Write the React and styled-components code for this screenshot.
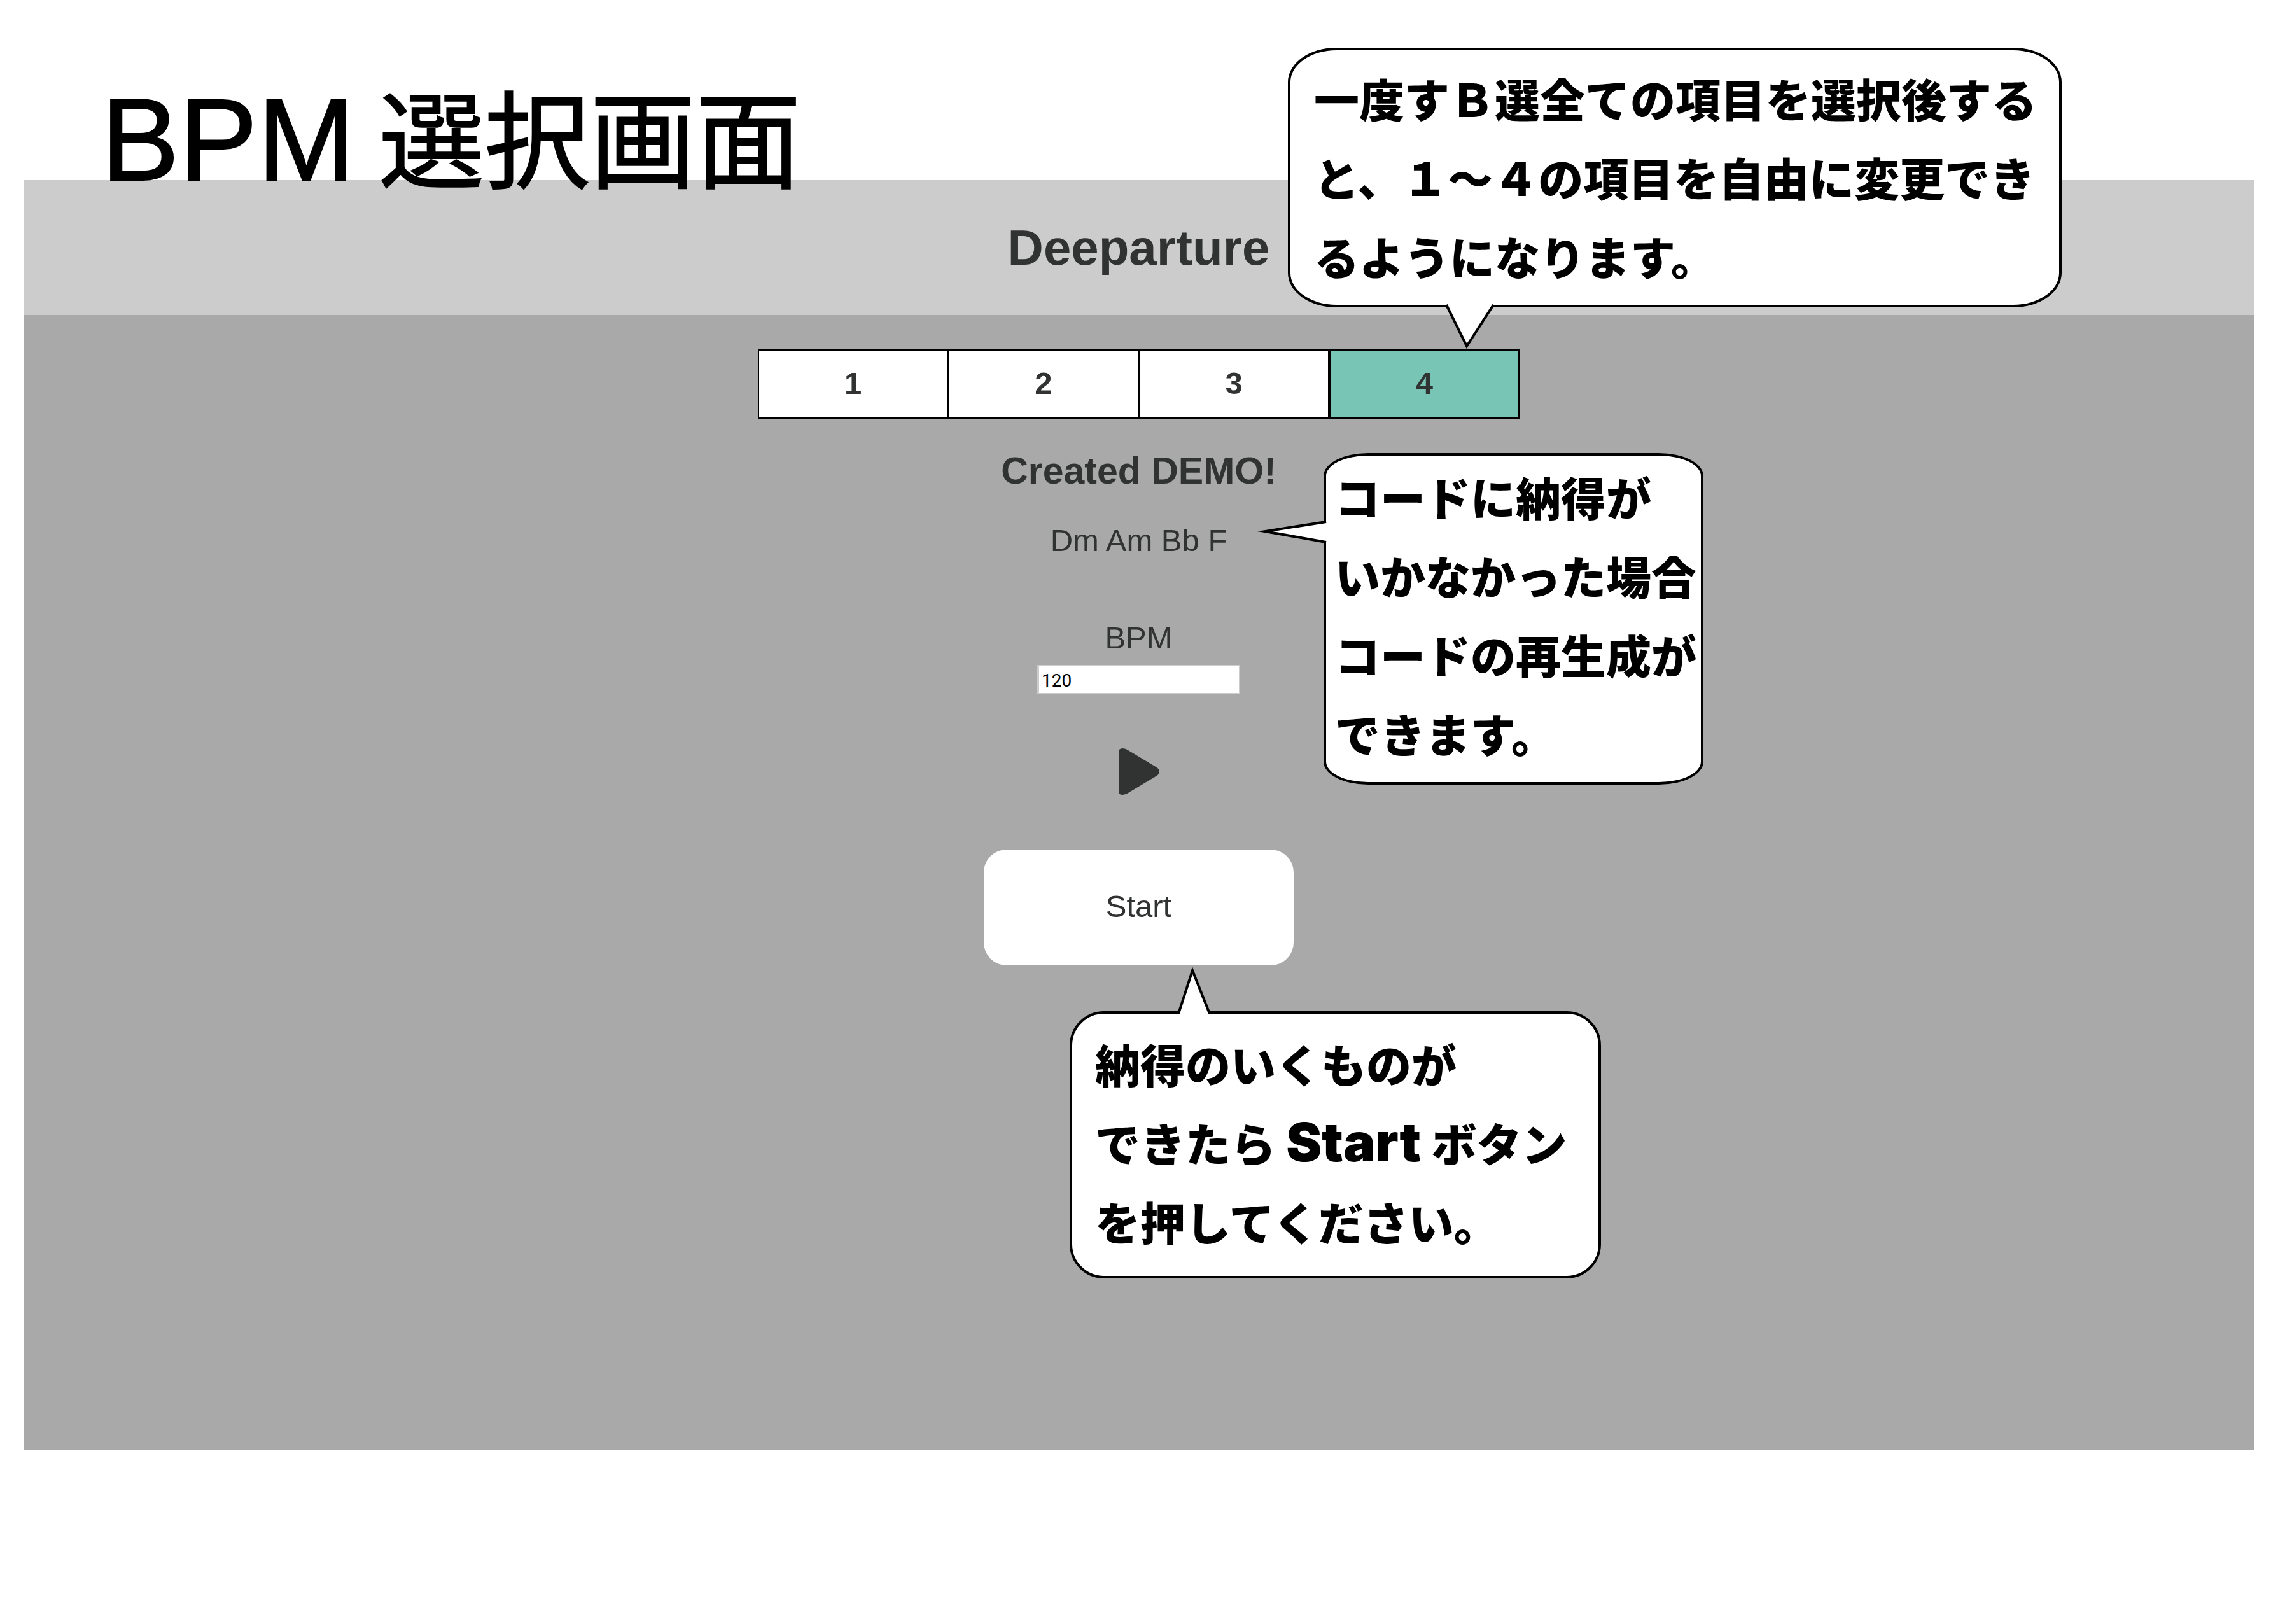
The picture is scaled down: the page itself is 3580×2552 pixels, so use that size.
import React, { useState } from "react";
import styled, { createGlobalStyle } from "styled-components";

const GlobalStyle = createGlobalStyle`
  *, *::before, *::after { box-sizing: border-box; }
  body {
    margin: 0;
    background: #fff;
    color: #303332;
    font-family: "Liberation Sans", "Noto Sans CJK JP", sans-serif;
    font-size: 49px;
    line-height: 56px;
  }
`;

const Page = styled.div`
  position: relative;
  display: flex;
  flex-direction: column;
  min-height: 100vh;
  padding: 0 38px 273px 37px;
`;

const PageTitle = styled.h1`
  position: relative;
  z-index: 1;
  margin: 0 0 -48px;
  padding: 91px 0 0 122px;
  color: #000;
  font-family: "Noto Sans CJK JP", sans-serif;
  font-size: 166px;
  font-weight: 400;
  line-height: 240px;
  -webkit-text-stroke: 2px #000;
`;

const Latin = styled.span`
  font-family: ${({ $font }) => $font}, sans-serif;
  font-size: ${({ $size }) => $size}px;
  line-height: 0;
`;

const Screen = styled.main`
  display: flex;
  flex: 1;
  flex-direction: column;
  background: #a9a9a9;
`;

const AppHeader = styled.header`
  display: flex;
  align-items: center;
  justify-content: center;
  height: 212px;
  background: #ccc;
`;

const AppName = styled.h2`
  margin: 0;
  font-size: 78px;
  line-height: 88px;
`;

const Content = styled.div`
  display: flex;
  flex-direction: column;
  align-items: center;
  padding-top: 54px;
`;

const Steps = styled.nav`
  display: grid;
  grid-template-columns: repeat(4, 1fr);
  width: 1197px;
  margin-bottom: 48px;
  border: solid #000;
  border-width: 1px 0;
`;

const StepButton = styled.button`
  height: 107px;
  padding: 0 0 4px;
  border: 2px solid #000;
  background: ${({ $active }) => ($active ? "#78c4b5" : "#fff")};
  color: inherit;
  font: inherit;
  font-weight: 700;
`;

const DemoHeading = styled.h3`
  margin: 0 0 47px;
  font-size: 59px;
  line-height: 68px;
`;

const Chords = styled.p`
  margin: 0 0 97px;
`;

const TempoField = styled.div`
  display: flex;
  flex-direction: column;
  align-items: center;
  gap: 15px;
  margin-bottom: 85px;
`;

const TempoInput = styled.input`
  width: 319px;
  height: 46px;
  padding: 2px 4px 0;
  border: 2px solid #ccc;
  border-width: 2px 2px 2px 3px;
  border-radius: 0;
  background: #fff;
  color: #000;
  font-family: Roboto, sans-serif;
  font-size: 28px;
`;

const PlayButton = styled.button`
  display: flex;
  margin-bottom: 86px;
  padding: 0;
  border: 0;
  background: none;
  color: inherit;
`;

const StartButton = styled.button`
  width: 487px;
  height: 182px;
  padding: 0 0 4px;
  border: 0;
  border-radius: 36px;
  background: #fff;
  color: inherit;
  font: inherit;
`;

const Bubble = styled.aside`
  position: absolute;
  z-index: 2;
  top: ${({ $top }) => $top}px;
  left: calc(50% + ${({ $shift }) => $shift}px);
  width: ${({ $width }) => $width}px;
  height: ${({ $height }) => $height}px;
  padding: ${({ $padding }) => $padding};
  border: 4px solid #000;
  border-radius: ${({ $radius }) => $radius};
  background: #fff;
  color: #000;
  font-family: "Noto Sans CJK JP", sans-serif;
  font-size: 71px;
  font-weight: 900;
  line-height: 124px;
  white-space: nowrap;
`;

const BubbleText = styled.p`
  margin: 0;
`;

const Tail = styled.svg`
  position: absolute;
  top: ${({ $y }) => $y}px;
  left: ${({ $x }) => $x}px;
  overflow: visible;
  fill: #fff;
  stroke: #000;
  stroke-width: 4px;
  stroke-miterlimit: 20;
`;

const STEPS = [1, 2, 3, 4];

export default function App() {
  const [step, setStep] = useState(4);
  const [bpm, setBpm] = useState("120");

  return (
    <>
      <GlobalStyle />
      <Page>
        <PageTitle>
          <Latin $size={184} $font='"Liberation Sans"'>BPM</Latin> 選択画面
        </PageTitle>

        <Screen>
          <AppHeader>
            <AppName>Deeparture</AppName>
          </AppHeader>
          <Content>
            <Steps aria-label="Steps">
              {STEPS.map((n) => (
                <StepButton
                  key={n}
                  type="button"
                  $active={n === step}
                  aria-current={n === step ? "step" : undefined}
                  onClick={() => setStep(n)}
                >
                  {n}
                </StepButton>
              ))}
            </Steps>
            <DemoHeading>Created DEMO!</DemoHeading>
            <Chords>Dm Am Bb F</Chords>
            <TempoField>
              <label htmlFor="bpm">BPM</label>
              <TempoInput
                id="bpm"
                inputMode="numeric"
                value={bpm}
                onChange={(e) => setBpm(e.target.value)}
              />
            </TempoField>
            <PlayButton type="button" aria-label="Play">
              <svg width="64" height="73" viewBox="0 0 64 73" fill="currentColor">
                <path d="M0 6Q0 0 6 0Q11 0 15 3L60 30Q64 33 64 36.500Q64 40 60 43L15 70Q11 73 6 73Q0 73 0 68Z" />
              </svg>
            </PlayButton>
            <StartButton type="button">Start</StartButton>
          </Content>
        </Screen>

        <Bubble $top={75} $shift={234} $width={1216} $height={408} $padding="12px 37px" $radius="76px / 54px">
          <BubbleText>
            一度すＢ選全ての項目を選択後する
            <br />
            と、１〜４の項目を自由に変更でき
            <br />
            るようになります。
          </BubbleText>
          <Tail $x={245} $y={400} width="76" height="70" viewBox="0 0 76 70">
            <path d="M0 0L32 65L74 0" />
          </Tail>
        </Bubble>

        <Bubble $top={712} $shift={290} $width={597} $height={521} $padding="1px 14px" $radius="70px / 36px">
          <BubbleText>
            コードに納得が
            <br />
            いかなかった場合
            <br />
            コードの再生成が
            <br />
            できます。
          </BubbleText>
          <Tail $x={-96} $y={103} width="96" height="34" viewBox="0 0 96 34">
            <path d="M96 1L0 16L96 33" />
          </Tail>
        </Bubble>

        <Bubble $top={1589} $shift={-109} $width={835} $height={420} $padding="15px 36px" $radius="54px">
          <BubbleText>
            納得のいくものが
            <br />
            できたら <Latin $size={84} $font="Inter">Start</Latin> ボタン
            <br />
            を押してください。
          </BubbleText>
          <Tail $x={167} $y={-66} width="50" height="66" viewBox="0 0 50 66">
            <path d="M0 66L22 -2L49 66" />
          </Tail>
        </Bubble>
      </Page>
    </>
  );
}
